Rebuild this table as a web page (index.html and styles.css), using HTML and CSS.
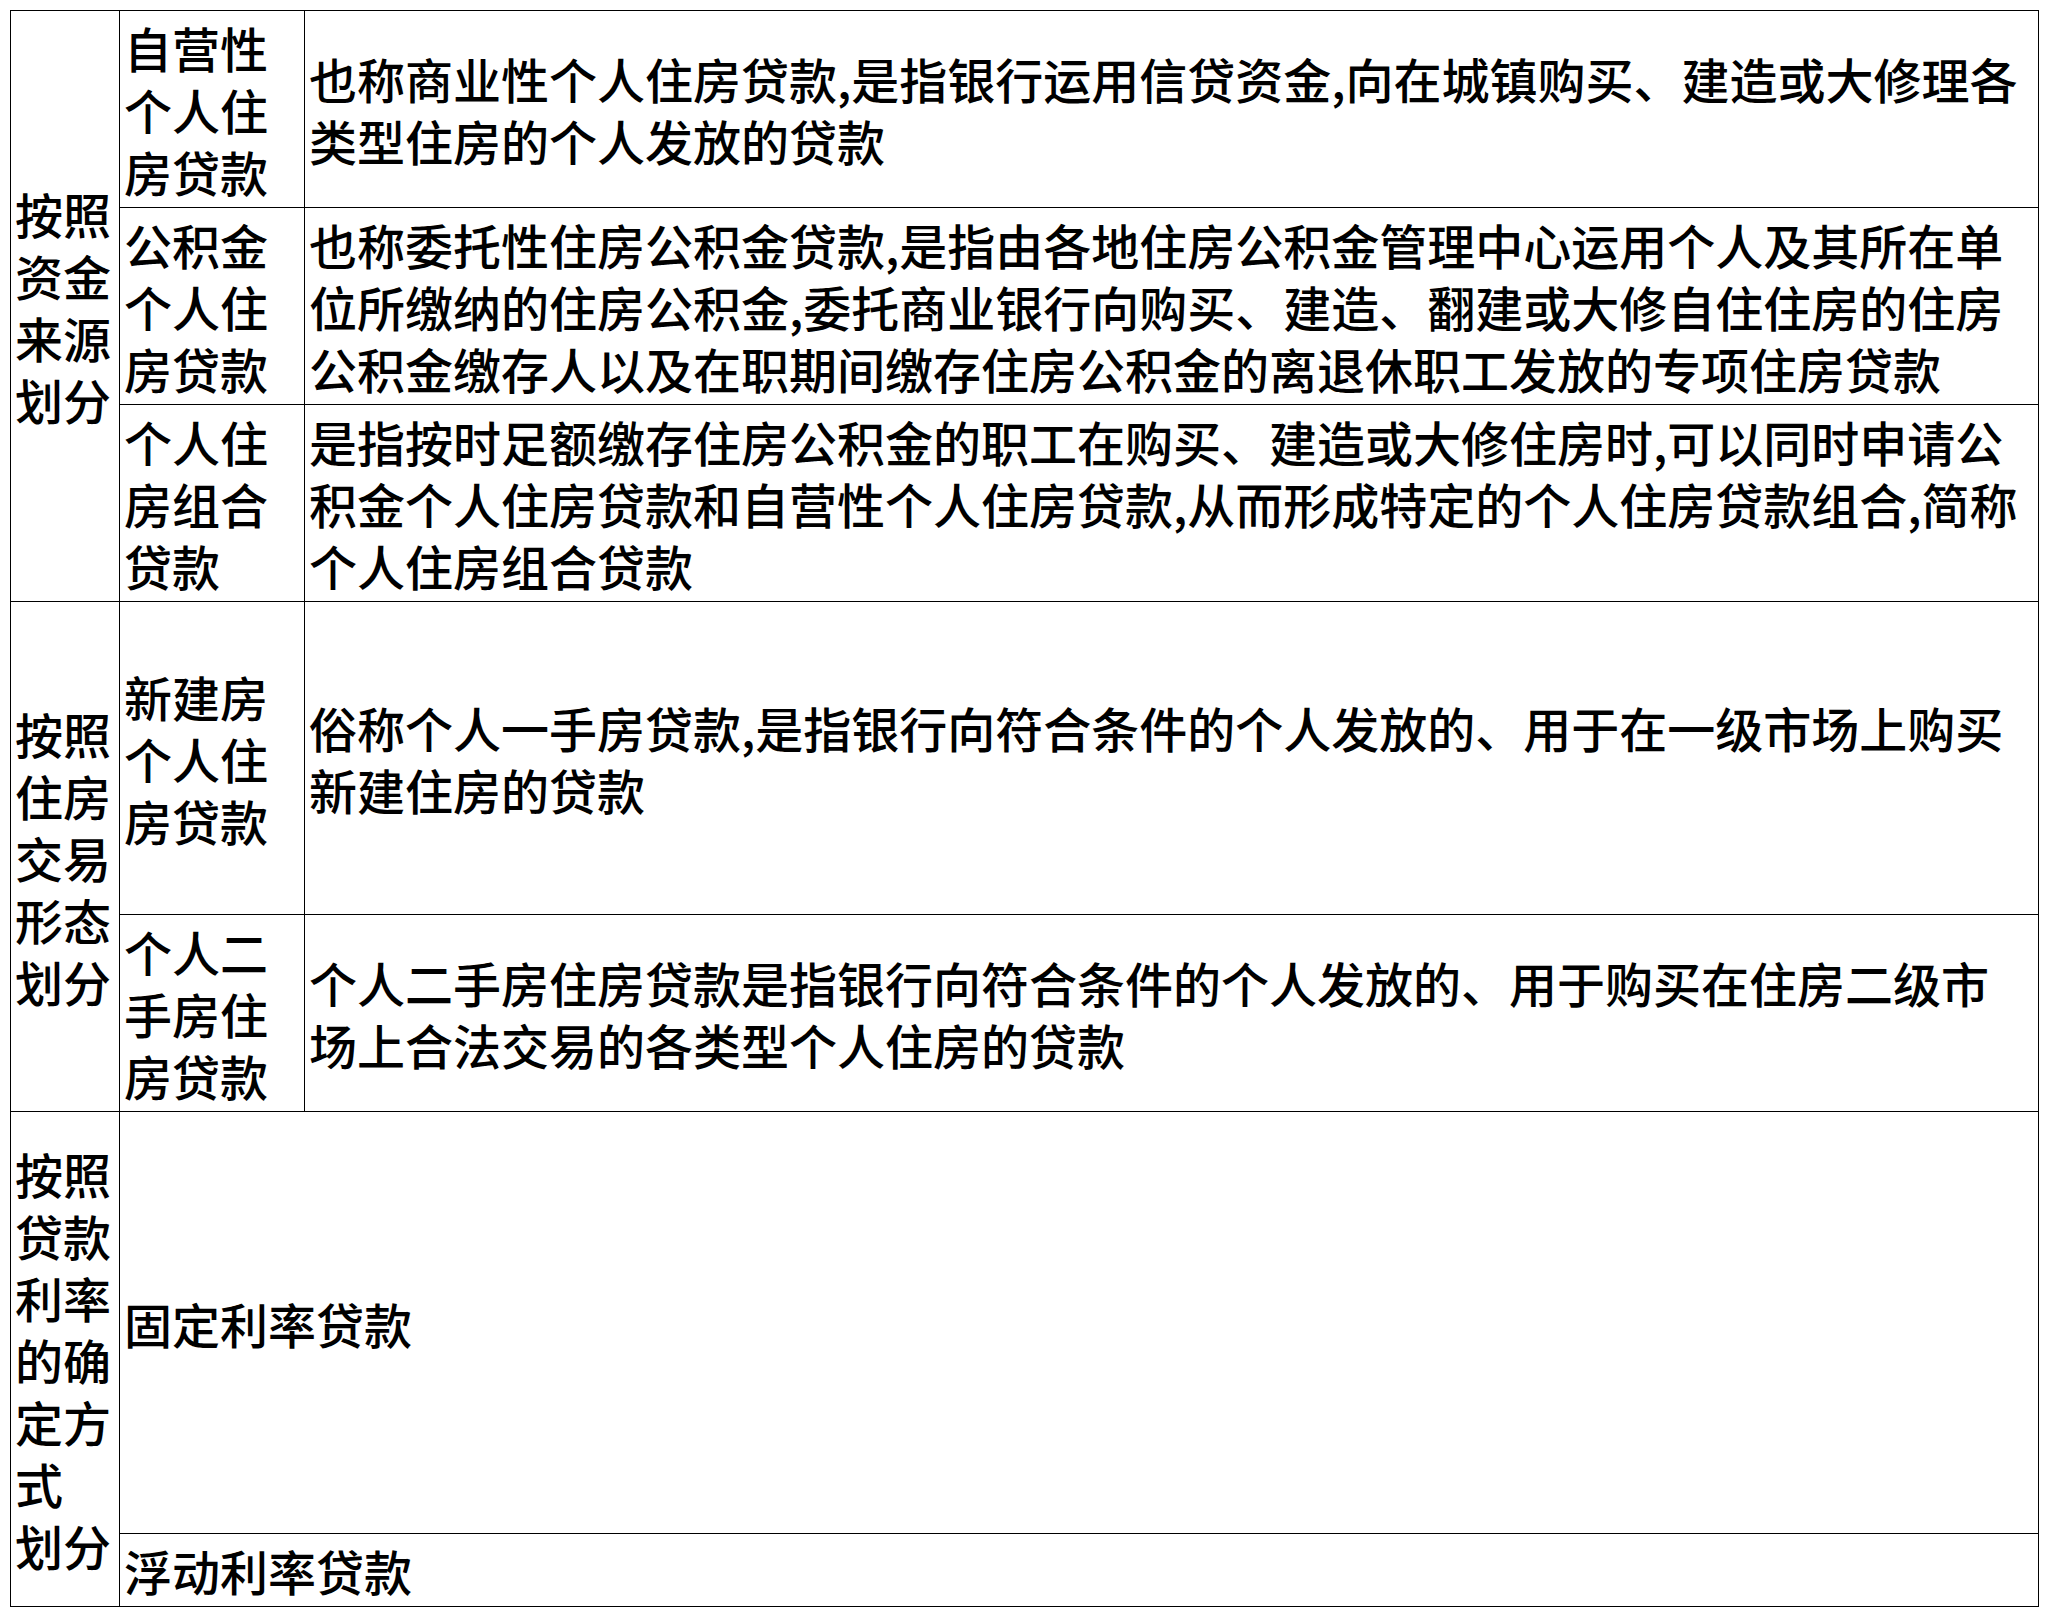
FILE: index.html
```html
<!DOCTYPE html>
<html lang="zh-CN">
<head>
    <meta charset="UTF-8">
    <title>个人住房贷款分类</title>
    <link rel="stylesheet" href="styles.css">
</head>
<body>
    <table class="loan-table">
        <colgroup>
            <col class="col-group">
            <col class="col-name">
            <col class="col-desc">
        </colgroup>
        <tr class="row-std">
            <td class="group" rowspan="3">按照资金来源划分</td>
            <td class="name">自营性个人住房贷款</td>
            <td class="desc">也称商业性个人住房贷款,是指银行运用信贷资金,向在城镇购买、建造或大修理各类型住房的个人发放的贷款</td>
        </tr>
        <tr class="row-std">
            <td class="name">公积金个人住房贷款</td>
            <td class="desc">也称委托性住房公积金贷款,是指由各地住房公积金管理中心运用个人及其所在单位所缴纳的住房公积金,委托商业银行向购买、建造、翻建或大修自住住房的住房公积金缴存人以及在职期间缴存住房公积金的离退休职工发放的专项住房贷款</td>
        </tr>
        <tr class="row-std">
            <td class="name">个人住房组合贷款</td>
            <td class="desc">是指按时足额缴存住房公积金的职工在购买、建造或大修住房时,可以同时申请公积金个人住房贷款和自营性个人住房贷款,从而形成特定的个人住房贷款组合,简称个人住房组合贷款</td>
        </tr>
        <tr class="row-tall">
            <td class="group" rowspan="2">按照住房交易形态划分</td>
            <td class="name">新建房个人住房贷款</td>
            <td class="desc">俗称个人一手房贷款,是指银行向符合条件的个人发放的、用于在一级市场上购买新建住房的贷款</td>
        </tr>
        <tr class="row-std">
            <td class="name">个人二手房住房贷款</td>
            <td class="desc">个人二手房住房贷款是指银行向符合条件的个人发放的、用于购买在住房二级市场上合法交易的各类型个人住房的贷款</td>
        </tr>
        <tr class="row-fixed">
            <td class="group" rowspan="2">按照贷款利率的确定方式<br>划分</td>
            <td class="name" colspan="2">固定利率贷款</td>
        </tr>
        <tr class="row-float">
            <td class="name" colspan="2">浮动利率贷款</td>
        </tr>
    </table>
</body>
</html>
```

FILE: styles.css
```css
body {
    margin: 0;
    padding: 10px 0 0 10px;
    background-color: #fff;
    font-family: "Noto Sans CJK SC", "Microsoft YaHei", sans-serif;
    color: #000;
}
.loan-table {
    border-collapse: collapse;
    table-layout: fixed;
    width: 2028px;
    font-size: 48px;
    font-weight: 500;
    line-height: 62px;
}
.col-group {
    width: 109px;
}
.col-name {
    width: 185px;
}
.col-desc {
    width: 1734px;
}
.loan-table td {
    border: 1px solid #000;
    padding: 0 8px 0 4px;
    vertical-align: middle;
    text-align: left;
    overflow: hidden;
}
.loan-table td.group {
    padding: 0 2px 0 4px;
}
.row-std {
    height: 197px;
}
.row-tall {
    height: 313px;
}
.row-fixed {
    height: 422px;
}
.row-float {
    height: 73px;
}
```
